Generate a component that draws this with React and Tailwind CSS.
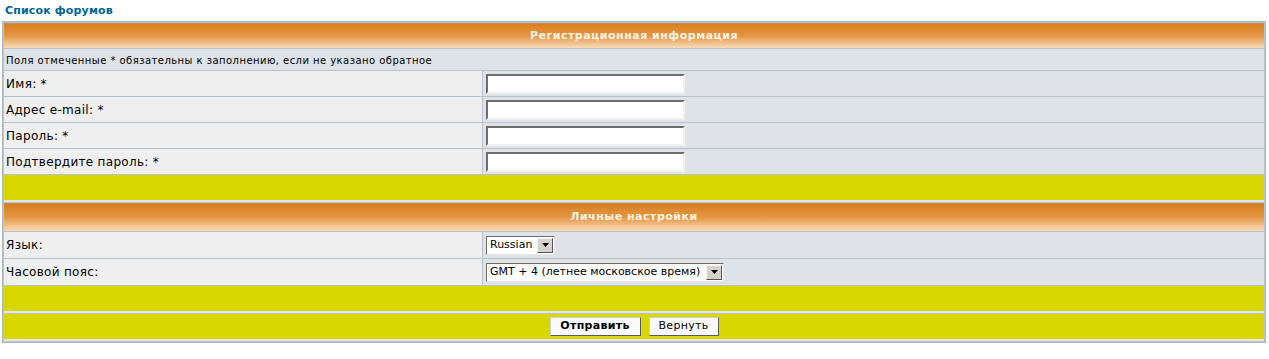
import React from "react";

const font = { fontFamily: '"DejaVu Sans", Verdana, sans-serif' };

const HeadRow = ({ title, h = "h-[25px]" }) => (
  <tr>
    <td
      colSpan={2}
      className={`${h} border-t border-t-[#c98b55] bg-gradient-to-b from-[#d97f1c] via-[#e49745] to-[#f8dcb6] text-center text-[11px] font-bold tracking-[0.5px] text-[#fff3e2]`}
    >
      {title}
    </td>
  </tr>
);

const TextInput = () => (
  <div className="h-[20px] w-[199px] border-2 border-t-[#6e6e6e] border-l-[#6e6e6e] border-b-[#f0f0f0] border-r-[#f0f0f0] bg-white" />
);

const Select = ({ value, width }) => (
  <div
    className={`flex h-[19px] items-center border border-t-[#6e6e6e] border-l-[#6e6e6e] border-b-[#e8e8e8] border-r-[#e8e8e8] bg-white ${width}`}
  >
    <span className="flex-1 whitespace-nowrap pl-[3px] text-[11px] text-black">
      {value}
    </span>
    <span className="mr-[1px] flex h-[15px] w-[16px] shrink-0 items-center justify-center border border-t-[#f4f4f4] border-l-[#f4f4f4] border-b-[#555] border-r-[#555] bg-[#d6d3ce]">
      <svg width="7" height="4" viewBox="0 0 7 4">
        <path d="M0 0h7L3.5 4z" fill="#000" />
      </svg>
    </span>
  </div>
);

const FieldRow = ({ label, children, h = "h-[25px]" }) => (
  <tr>
    <td className={`${h} w-[478px] bg-[#efefef] pl-[2px] text-[12px] tracking-[0.3px] text-black`}>
      {label}
    </td>
    <td className="bg-[#dee3e7] pl-[3px]">{children}</td>
  </tr>
);

const YellowRow = ({ children }) => (
  <tr>
    <td
      colSpan={2}
      className="h-[27px] border-b-2 border-b-[#e4e7ea] bg-[#d8d800] text-center"
    >
      {children}
    </td>
  </tr>
);

export default function App() {
  return (
    <div className="min-h-[359px] bg-white px-[2px]" style={font}>
      <div className="h-[21px] pl-[3px] pt-[3px] text-[11px] font-bold tracking-[0.15px] text-[#006699]">
        Список форумов
      </div>
      <table className="w-[1264px] border-separate border-spacing-[1px] border border-[#a9b8c2] bg-[#b8c2ca]">
        <tbody>
          <HeadRow title="Регистрационная информация" />
          <tr>
            <td
              colSpan={2}
              className="h-[21px] bg-[#dee3e7] pl-[2px] pt-[2px] text-[10px] tracking-[0.45px] text-black"
            >
              Поля отмеченные * обязательны к заполнению, если не указано обратное
            </td>
          </tr>
          <FieldRow label="Имя: *">
            <TextInput />
          </FieldRow>
          <FieldRow label="Адрес e-mail: *">
            <TextInput />
          </FieldRow>
          <FieldRow label="Пароль: *">
            <TextInput />
          </FieldRow>
          <FieldRow label="Подтвердите пароль: *">
            <TextInput />
          </FieldRow>
          <YellowRow />
          <HeadRow title="Личные настройки" h="h-[28px]" />
          <FieldRow label="Язык:" h="h-[26px]">
            <Select value="Russian" width="w-[69px]" />
          </FieldRow>
          <FieldRow label="Часовой пояс:" h="h-[26px]">
            <Select value="GMT + 4 (летнее московское время)" width="w-[238px]" />
          </FieldRow>
          <YellowRow />
          <YellowRow>
            <div className="flex justify-center gap-[8px]">
              <button className="h-[19px] w-[91px] border border-t-[#d0d0d0] border-l-[#d0d0d0] border-b-[#5a5a5a] border-r-[#5a5a5a] bg-[#fafafa] text-[11px] font-bold tracking-[0.3px] text-black">
                Отправить
              </button>
              <button className="h-[19px] w-[70px] border border-t-[#d0d0d0] border-l-[#d0d0d0] border-b-[#5a5a5a] border-r-[#5a5a5a] bg-[#fafafa] text-[11px] tracking-[0.3px] text-black">
                Вернуть
              </button>
            </div>
          </YellowRow>
        </tbody>
      </table>
    </div>
  );
}
